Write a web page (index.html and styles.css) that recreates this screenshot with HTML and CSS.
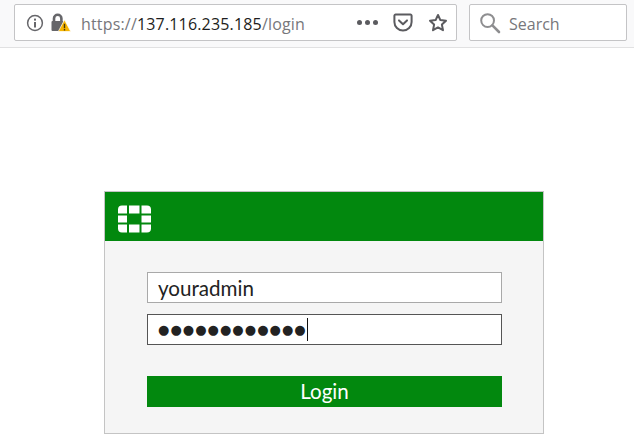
FILE: index.html
```html
<!DOCTYPE html>
<html lang="en">
<head>
    <meta charset="UTF-8">
    <meta name="viewport" content="width=device-width, initial-scale=1.0">
    <title>Login</title>
    <link rel="stylesheet" href="styles.css">
</head>
<body>
    <div class="toolbar">
        <div class="url-bar">
            <svg class="icon-info" width="18" height="18" viewBox="0 0 18 18">
                <circle cx="9" cy="9" r="7.400" fill="none" stroke="#66666a" stroke-width="1.500"/>
                <rect x="8" y="8" width="2" height="5.500" fill="#66666a"/>
                <rect x="8" y="4.600" width="2" height="2" fill="#66666a"/>
            </svg>
            <svg class="icon-lock" width="20" height="20" viewBox="0 0 20 20">
                <path d="M3 8V5.500a3.700 3.700 0 0 1 7.400 0V8" fill="none" stroke="#66666a" stroke-width="2.600"/>
                <path d="M0.500 9a1 1 0 0 1 1-1h10a1 1 0 0 1 1 1v9h-11a1 1 0 0 1-1-1z" fill="#66666a"/>
                <path d="M13.500 6.800l6.200 11.700H7.300z" fill="#f7b500" stroke="#fff" stroke-width=".7"/>
                <rect x="12.800" y="10.800" width="1.400" height="4.400" fill="#4a3a08"/>
                <rect x="12.800" y="16" width="1.400" height="1.500" fill="#4a3a08"/>
            </svg>
            <span class="url"><span class="url-dim">https://</span>137.116.235.185<span class="url-dim">/login</span></span>
            <span class="dots"><i></i><i></i><i></i></span>
            <svg class="icon-pocket" width="20" height="19" viewBox="0 0 20 19">
                <path d="M2.600 1.500h14.800a1.200 1.200 0 0 1 1.200 1.200v6.300a8.600 8.600 0 0 1-17.200 0V2.700a1.200 1.200 0 0 1 1.200-1.200z" fill="none" stroke="#5b5b5f" stroke-width="2"/>
                <path d="M6 7.400l4 3.800 4-3.800" fill="none" stroke="#5b5b5f" stroke-width="2" stroke-linecap="round" stroke-linejoin="round"/>
            </svg>
            <svg class="icon-star" width="20" height="20" viewBox="0 0 20 20">
                <path d="M10 2l2.400 5.100 5.600.7-4.100 3.800 1.100 5.600L10 14.400l-5 2.800 1.100-5.600L2 7.800l5.600-.7z" fill="none" stroke="#5b5b5f" stroke-width="2" stroke-linejoin="round"/>
            </svg>
        </div>
        <div class="search-bar">
            <svg width="22" height="22" viewBox="0 0 22 22">
                <circle cx="8.600" cy="8.600" r="6.400" fill="none" stroke="#8e8e90" stroke-width="2"/>
                <path d="M13.400 13.400l6.600 6.600" stroke="#8e8e90" stroke-width="2.600" stroke-linecap="round"/>
            </svg>
            <span class="search-label">Search</span>
        </div>
    </div>

    <div class="page">
        <div class="login-box">
            <div class="login-header">
                <svg class="logo" width="36" height="28" viewBox="0 0 36 28">
                    <path d="M10 0.500H5A4 4 0 0 0 1 4.500V8.500h9zM12 0.500h10.500v8H12zM24.500 0.500H30A4 4 0 0 1 34 4.500V8.500h-9.500zM1 10.500h9v7H1zM24.500 10.500H34v7h-9.500zM1 19.500h9v8H5a4 4 0 0 1-4-4zM12 19.500h10.500v8H12zM24.500 19.500H34v4a4 4 0 0 1-4 4h-5.500z" fill="#fff"/>
                </svg>
            </div>
            <div class="login-form">
                <div class="field">youradmin</div>
                <div class="field field-active"><span class="pw-dots">●●●●●●●●●●●●</span><span class="caret"></span></div>
                <div class="login-btn">Login</div>
            </div>
        </div>
    </div>
</body>
</html>
```

FILE: styles.css
```css
body {
    margin: 0;
    background-color: #fff;
    font-family: "Lato", sans-serif;
}

.toolbar {
    display: flex;
    gap: 12px;
    height: 48px;
    box-sizing: border-box;
    padding: 4px 7px 0 14px;
    background-color: #f9f9fa;
    border-bottom: 1px solid #e1e1e2;
}

.url-bar,
.search-bar {
    display: flex;
    align-items: center;
    height: 37px;
    box-sizing: border-box;
    background-color: #fff;
    border: 1px solid #c4c4c6;
    border-radius: 2px;
    font-family: "Open Sans", sans-serif;
    font-size: 16px;
}

.url-bar {
    width: 443px;
    padding-left: 11px;
}

.icon-lock {
    margin-left: 7px;
}

.url {
    margin-left: 10px;
    padding-top: 2px;
    color: #1d1d20;
    letter-spacing: 0.17px;
    white-space: nowrap;
    flex: 1;
}

.url-dim {
    color: #77777b;
}

.dots {
    display: flex;
    gap: 3px;
    margin-right: 15px;
}

.dots i {
    width: 5px;
    height: 5px;
    border-radius: 50%;
    background-color: #5b5b5f;
}

.icon-pocket {
    margin-right: 15px;
}

.icon-star {
    margin-right: 8px;
}

.search-bar {
    width: 158px;
    padding-left: 9px;
    gap: 8px;
}

.search-label {
    padding-top: 2px;
    color: #77777b;
}

.page {
    padding: 143px 0 0 104px;
}

.login-box {
    width: 440px;
    box-sizing: border-box;
    border: 1px solid #c4c4c4;
    background-color: #f5f5f5;
}

.login-header {
    display: flex;
    align-items: center;
    height: 49px;
    padding-left: 12px;
    background-color: #02880e;
}

.logo {
    margin-top: 4px;
}

.login-form {
    display: flex;
    flex-direction: column;
    gap: 11px;
    padding: 31px 41px 26px 42px;
}

.field {
    display: flex;
    align-items: center;
    height: 31px;
    box-sizing: border-box;
    padding-left: 10px;
    background-color: #fff;
    border: 1px solid #a9a9a9;
    color: #222;
    font-size: 20.6px;
}

.field-active {
    border-color: #555;
}

.pw-dots {
    font-family: "DejaVu Sans", sans-serif;
    font-size: 13px;
    letter-spacing: 1.05px;
}

.caret {
    width: 1px;
    height: 23px;
    background-color: #111;
}

.login-btn {
    height: 31px;
    margin-top: 20px;
    background-color: #02880e;
    color: #fff;
    font-size: 20.6px;
    line-height: 30px;
    text-align: center;
}
```
